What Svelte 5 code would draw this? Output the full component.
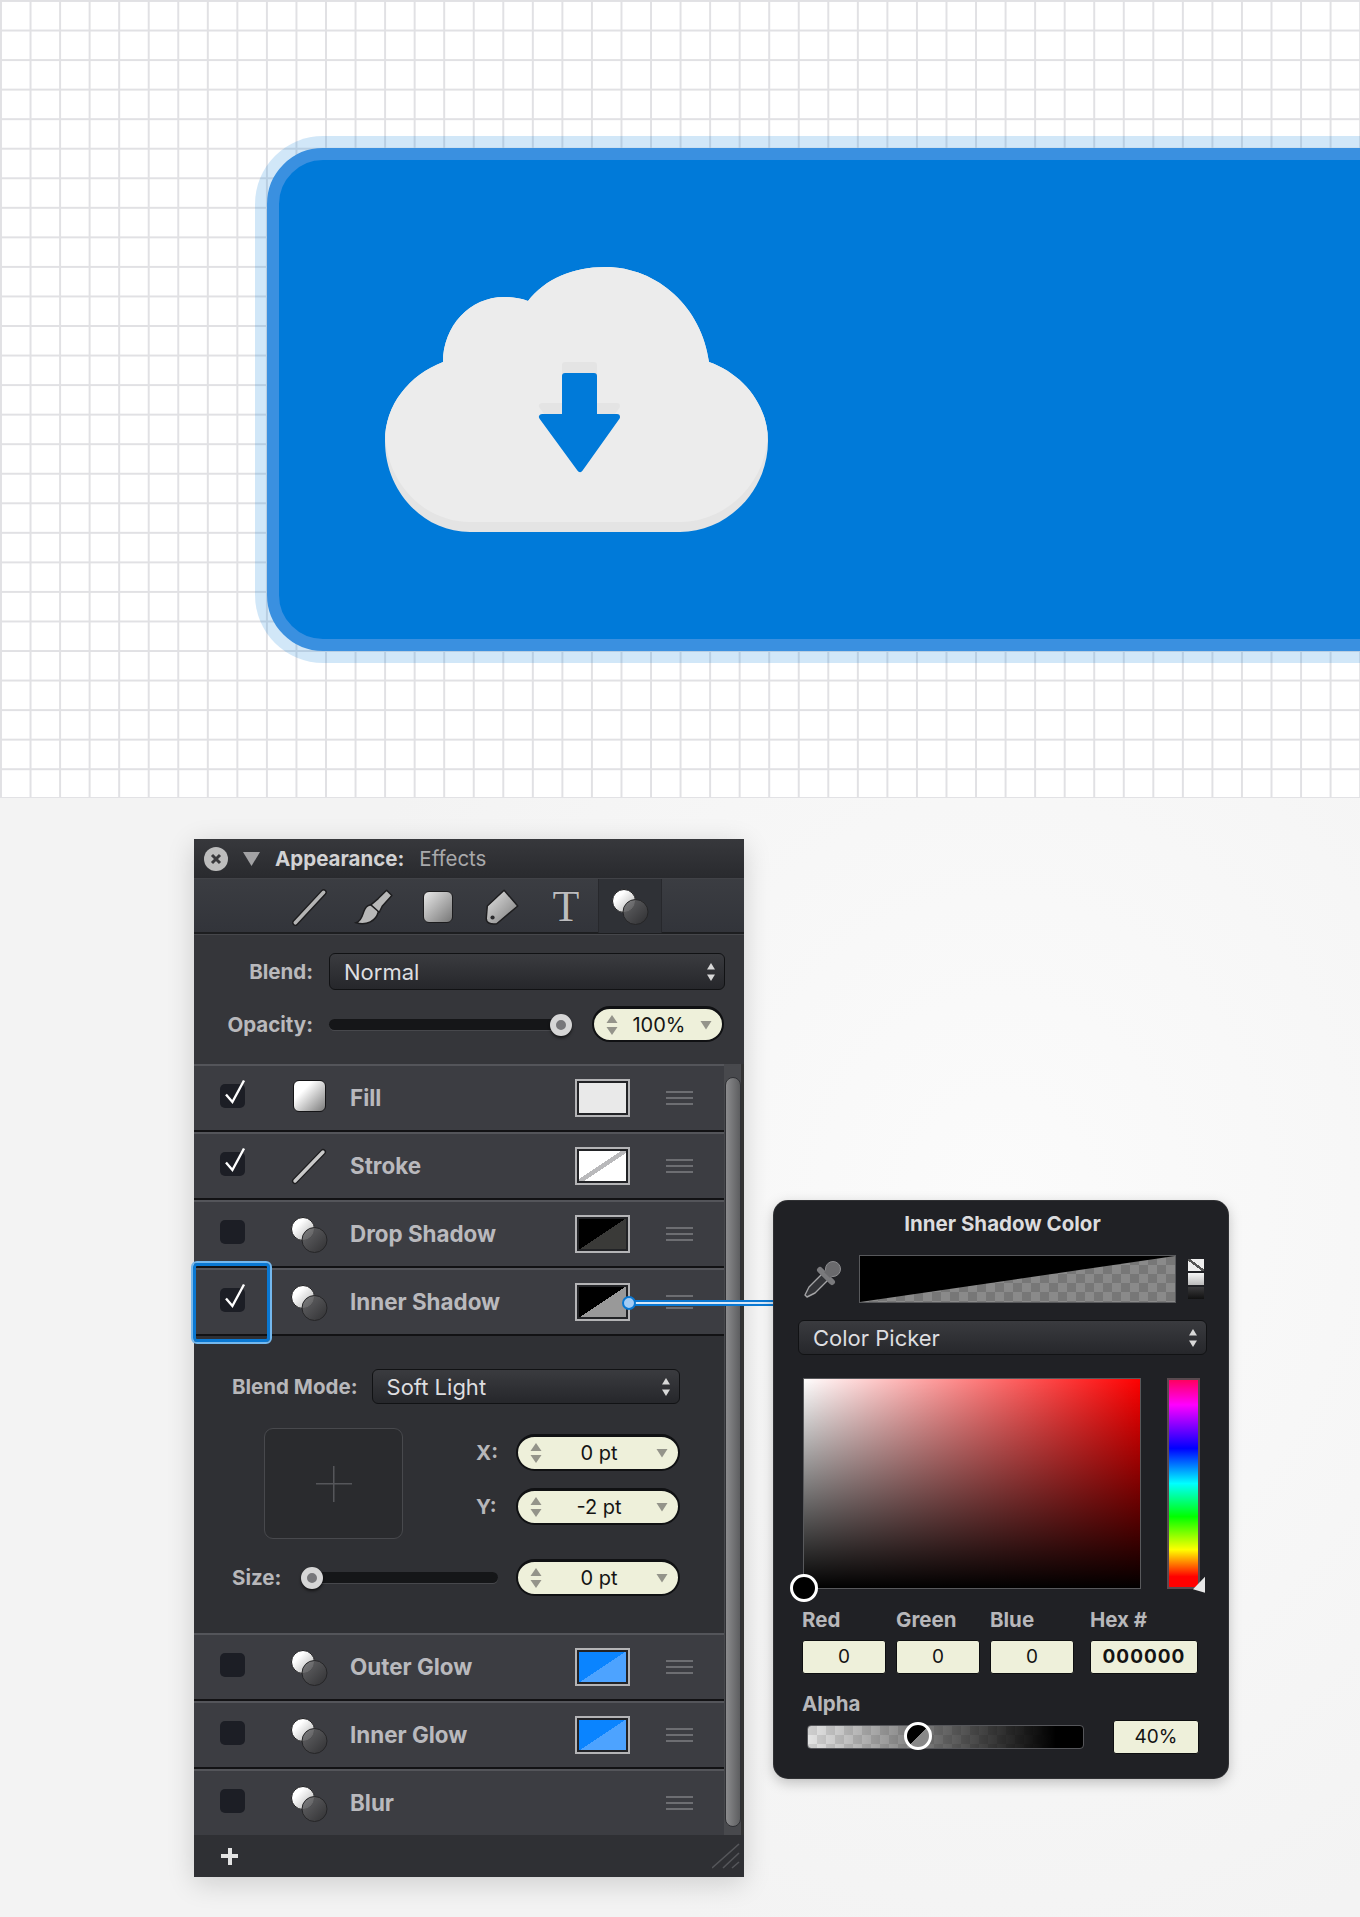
<script>
	const upperRows = [
		{ name: 'Fill', on: true, icon: 'fill', swatch: 'fill' },
		{ name: 'Stroke', on: true, icon: 'stroke', swatch: 'stroke' },
		{ name: 'Drop Shadow', on: false, icon: 'fx', swatch: 'drop' },
		{ name: 'Inner Shadow', on: true, icon: 'fx', swatch: 'inner' }
	];
	const lowerRows = [
		{ name: 'Outer Glow', on: false, icon: 'fx', swatch: 'glow' },
		{ name: 'Inner Glow', on: false, icon: 'fx', swatch: 'glow' },
		{ name: 'Blur', on: false, icon: 'fx', swatch: null }
	];
	const rgb = [
		{ label: 'Red', value: '0' },
		{ label: 'Green', value: '0' },
		{ label: 'Blue', value: '0' }
	];
	const cloud =
		'M470 532C423 532 385 491 385 441C385 405 409 375 443 362C443 326 470 297 504 297C512 297 520 298 528 301C545 279 573 267 605 267C658 267 702 308 709 362C743 374 768 405 768 441C768 491 727 532 680 532Z';
	const arrow = 'M565 376H594V417H617L580 469L542 417H565Z';
</script>

{#snippet fxIcon()}
	<svg class="row-icon" viewBox="0 0 37 37" width="37" height="37">
		<circle cx="12" cy="13" r="11.5" fill="url(#fxWhite)" stroke="#1d1d1f" />
		<circle cx="23.5" cy="24" r="12.5" fill="url(#fxDark)" fill-opacity="0.85" stroke="#252527" />
	</svg>
{/snippet}

{#snippet rowIcon(kind)}
	{#if kind === 'fill'}
		<span class="fill-icon"></span>
	{:else if kind === 'stroke'}
		<svg class="row-icon" viewBox="0 0 37 37" width="37" height="37">
			<line x1="4" y1="33" x2="32" y2="4" stroke="#1c1c1e" stroke-width="6" stroke-linecap="round" />
			<line x1="4" y1="33" x2="32" y2="4" stroke="#c9c9c9" stroke-width="3.4" stroke-linecap="round" />
		</svg>
	{:else}
		{@render fxIcon()}
	{/if}
{/snippet}

{#snippet effectRow(row)}
	<div class="row">
		<span class="check">
			{#if row.on}
				<svg viewBox="0 0 25 24" width="25" height="24">
					<path d="M6 10.5L12.4 18L24 -3.5" fill="none" stroke="#fff" stroke-width="2.4" />
				</svg>
			{/if}
		</span>
		<span class="row-icon-cell">{@render rowIcon(row.icon)}</span>
		<span class="row-name">{row.name}</span>
		{#if row.swatch}
			<span class="swatch {row.swatch}"></span>
		{:else}
			<span class="swatch-gap"></span>
		{/if}
		<span class="handle"><i></i><i></i><i></i></span>
	</div>
{/snippet}

{#snippet updown()}
	<svg class="updown" viewBox="0 0 8 20" width="8" height="20">
		<path d="M4 1L8 7.5H0Z" fill="#d8d8d8" />
		<path d="M4 19L0 12.5H8Z" fill="#d8d8d8" />
	</svg>
{/snippet}

{#snippet select(text, cls)}
	<div class="select {cls}">
		<span>{text}</span>
		{@render updown()}
	</div>
{/snippet}

{#snippet stepper(value, cls)}
	<div class="stepper {cls}">
		<svg viewBox="0 0 12 22" width="12" height="22">
			<path d="M6 1L11.5 9H.5Z" fill="#94948a" />
			<path d="M6 21L.5 13H11.5Z" fill="#94948a" />
		</svg>
		<span>{value}</span>
		<svg viewBox="0 0 12 10" width="12" height="10">
			<path d="M6 9.5L.5 1H11.5Z" fill="#94948a" />
		</svg>
	</div>
{/snippet}

<div class="page">
	<section class="canvas">
		<div class="button">
			<svg class="cloud" viewBox="385 267 384 266" width="384" height="266">
				<defs>
					<clipPath id="cloudClip"><path d={cloud} /></clipPath>
				</defs>
				<path d={cloud} fill="#e4e4e4" />
				<g clip-path="url(#cloudClip)">
					<path d={cloud} fill="#ececec" transform="translate(0 -10)" />
				</g>
				<path d={arrow} fill="#e4e4e4" stroke="#e4e4e4" stroke-width="6" stroke-linejoin="round" transform="translate(0 -11)" />
				<path d={arrow} fill="#007ad9" stroke="#007ad9" stroke-width="6" stroke-linejoin="round" />
			</svg>
		</div>
	</section>

	<section class="stage">
		<svg class="defs" width="0" height="0">
			<defs>
				<linearGradient id="fxWhite" x1="0" y1="0" x2="1" y2="1">
					<stop offset="0.3" stop-color="#fff" />
					<stop offset="1" stop-color="#aaa" />
				</linearGradient>
				<linearGradient id="fxDark" x1="0" y1="0" x2="1" y2="1">
					<stop offset="0" stop-color="#6e6e70" />
					<stop offset="1" stop-color="#2e2e30" />
				</linearGradient>
				<linearGradient id="toolGrad" x1="0" y1="0" x2="1" y2="1">
					<stop offset="0" stop-color="#e6e6e6" />
					<stop offset="1" stop-color="#777" />
				</linearGradient>
			</defs>
		</svg>
		<div class="panel">
			<header class="titlebar">
				<span class="close">
					<svg viewBox="0 0 24 24" width="24" height="24">
						<circle cx="12" cy="12" r="12" fill="#bdbdbd" />
						<path d="M8 8L16 16M16 8L8 16" stroke="#39393c" stroke-width="3" />
					</svg>
				</span>
				<svg class="disclosure" viewBox="0 0 17 14" width="17" height="14">
					<path d="M0 0H17L8.5 14Z" fill="#a2a2a4" />
				</svg>
				<strong>Appearance:</strong>
				<span class="subtitle">Effects</span>
			</header>

			<nav class="toolbar">
				<span class="tool">
					<svg viewBox="0 0 40 40" width="42" height="42">
						<line x1="6" y1="35" x2="33" y2="6" stroke="#1d1d1f" stroke-width="6" stroke-linecap="round" />
						<line x1="6" y1="35" x2="33" y2="6" stroke="#b4b4b4" stroke-width="3.4" stroke-linecap="round" />
					</svg>
				</span>
				<span class="tool">
					<svg viewBox="0 0 40 40" width="42" height="42">
						<path d="M3 35C13 38 22 33 24 25C24 19 19 16 14 19C8 23 11 32 3 35Z" fill="#b8b8b8" stroke="#1d1d1f" stroke-width="1.4" />
						<path d="M17 18L25 25L28 19L37 9L32 4L24 12Z" fill="#b8b8b8" stroke="#1d1d1f" stroke-width="1.4" stroke-linejoin="round" />
					</svg>
				</span>
				<span class="tool"><span class="square-icon"></span></span>
				<span class="tool">
					<svg viewBox="0 0 40 40" width="42" height="42">
						<path d="M6 19L22 4L35 19L15 36Q5 37 5 31Z" fill="url(#toolGrad)" stroke="#1d1d1f" stroke-width="1.4" stroke-linejoin="round" />
						<circle cx="11" cy="30" r="2" fill="#2b2b2d" />
					</svg>
				</span>
				<span class="tool"><span class="t-icon">T</span></span>
				<span class="tool active">{@render fxIcon()}</span>
			</nav>

			<div class="blend">
				<div class="blend-row">
					<span class="blend-label">Blend:</span>
					<div class="grow">{@render select('Normal', 'main')}</div>
				</div>
				<div class="blend-row opacity">
					<span class="blend-label">Opacity:</span>
					<div class="slider opacity-slider"><span class="knob end"></span></div>
					{@render stepper('100%', 'opacity-field')}
				</div>
			</div>

			<div class="body">
				<div class="list">
					{#each upperRows as row}
						{@render effectRow(row)}
					{/each}

					<div class="editor">
						<div class="editor-top">
							<span class="label">Blend Mode:</span>
							{@render select('Soft Light', 'mode')}
						</div>
						<div class="offset">
							<div class="anchor"><span class="cross"></span></div>
							<div class="xy">
								<div class="xy-row">
									<span class="label">X:</span>
									{@render stepper('0 pt', '')}
								</div>
								<div class="xy-row">
									<span class="label">Y:</span>
									{@render stepper('-2 pt', '')}
								</div>
							</div>
						</div>
						<div class="size-row">
							<span class="label">Size:</span>
							<div class="slider size-slider"><span class="knob start"></span></div>
							{@render stepper('0 pt', '')}
						</div>
					</div>

					{#each lowerRows as row}
						{@render effectRow(row)}
					{/each}
				</div>
				<div class="scrollbar"><span class="thumb"></span></div>
			</div>

			<footer class="footer">
				<span class="plus"></span>
				<svg class="grip" viewBox="0 0 28 26" width="28" height="26">
					<path d="M0 25L27 1M11 25L27 10M20 25L27 19" stroke="#55565a" stroke-width="1.6" fill="none" />
				</svg>
			</footer>

			<div class="highlight"></div>
			<div class="connector"><span class="dot"></span></div>

			<aside class="picker">
				<h2>Inner Shadow Color</h2>
				<div class="well-row">
					<svg class="dropper" viewBox="0 0 40 40" width="40" height="40">
						<path d="M6 28L20 14L26 20L12 34L4 38L2 36Z" fill="#333438" stroke="#a4a4a6" stroke-width="1.4" stroke-linejoin="round" />
						<line x1="17" y1="11" x2="29" y2="23" stroke="#7a7a7d" stroke-width="6" stroke-linecap="round" />
						<circle cx="30" cy="10" r="7.5" fill="#6a6a6d" stroke="#8d8d90" />
						<path d="M24 16L30 10" stroke="#6a6a6d" stroke-width="8" />
					</svg>
					<div class="well"><span class="well-solid"></span></div>
					<div class="minis">
						<span class="mini none"></span>
						<span class="mini white"></span>
						<span class="mini black"></span>
					</div>
				</div>
				{@render select('Color Picker', 'picker-select')}
				<div class="spectrum">
					<div class="sv"><span class="sv-dot"></span></div>
					<div class="hue"><span class="hue-mark"></span></div>
				</div>
				<div class="values">
					{#each rgb as c}
						<div class="value">
							<span class="label">{c.label}</span>
							<span class="num">{c.value}</span>
						</div>
					{/each}
					<div class="value hex">
						<span class="label">Hex #</span>
						<span class="num">000000</span>
					</div>
				</div>
				<div class="alpha-label label">Alpha</div>
				<div class="alpha-row">
					<div class="alpha">
						<span class="alpha-knob"></span>
					</div>
					<span class="num alpha-num">40%</span>
				</div>
			</aside>
		</div>
	</section>
</div>

<style>
	:global(body) {
		margin: 0;
		font-family: Inter, 'Liberation Sans', sans-serif;
	}
	.page {
		width: 1360px;
		height: 1917px;
		overflow: hidden;
		background: radial-gradient(ellipse 700px 800px at 1000px 1200px, #fbfbfb, #f3f3f3);
	}
	.canvas {
		box-sizing: border-box;
		height: 798px;
		padding: 148px 0 0 267px;
		overflow: hidden;
		background-color: #fff;
		background-image:
			linear-gradient(#f0f0f1 0.4px, #e1e1e4 0.4px, #e1e1e4 1.5px, #f2f2f3 1.5px, #f2f2f3 2px, transparent 2px),
			linear-gradient(90deg, #f0f0f1 0.4px, #e1e1e4 0.4px, #e1e1e4 1.5px, #f2f2f3 1.5px, #f2f2f3 2px, transparent 2px);
		background-size: 29.55px 29.55px;
		border-bottom: 1px solid #e2e2e5;
	}
	.button {
		box-sizing: border-box;
		width: 1200px;
		height: 503px;
		padding: 107px 106px;
		background: #007ad9;
		border: 12px solid #3a90e0;
		border-radius: 56px;
		box-shadow: 0 0 0 12px rgba(0, 120, 215, 0.18);
	}
	.cloud {
		display: block;
	}

	.stage {
		padding: 41px 0 0 194px;
	}
	.defs {
		position: absolute;
	}
	.panel {
		position: relative;
		width: 550px;
		box-shadow: 0 6px 26px rgba(0, 0, 0, 0.16);
		color: #b9b9bc;
		background: #35363a;
	}

	.titlebar {
		display: flex;
		align-items: center;
		box-sizing: border-box;
		height: 39px;
		padding-left: 10px;
		background: linear-gradient(#37383c, #292a2e);
		border-radius: 9px 9px 0 0;
		font-size: 20.5px;
	}
	.close {
		display: flex;
		margin-right: 15px;
	}
	.disclosure {
		margin-right: 15px;
	}
	.titlebar strong {
		color: #d2d2d4;
		font-weight: 700;
	}
	.subtitle {
		margin-left: 15px;
		color: #a9a9ab;
	}

	.toolbar {
		display: flex;
		box-sizing: border-box;
		height: 56px;
		padding-left: 84px;
		background: linear-gradient(#3b3d42, #32343a);
		border-top: 1px solid #414247;
		border-bottom: 2px solid #1d1e20;
	}
	.tool {
		display: flex;
		align-items: center;
		justify-content: center;
		width: 64px;
		height: 53px;
		padding-top: 1px;
	}
	.tool.active {
		background: #2f3136;
		box-shadow: inset 1px 0 #27282c, inset -1px 0 #27282c;
	}
	.square-icon {
		width: 30px;
		height: 32px;
		box-sizing: border-box;
		border: 1.5px solid #1d1d1f;
		border-radius: 6px;
		background: linear-gradient(135deg, #e8e8e8, #777);
	}
	.t-icon {
		font: 400 44px/1 'Liberation Serif', serif;
		color: #bcbcbe;
		text-shadow: 0 0 1px #111;
	}

	.blend {
		box-sizing: border-box;
		height: 130px;
		padding-top: 18px;
		border-top: 1px solid #46474b;
	}
	.blend-row {
		display: flex;
		align-items: center;
		padding-right: 19px;
	}
	.blend-row.opacity {
		margin-top: 16px;
		padding-right: 20px;
	}
	.blend-label {
		width: 119px;
		margin-right: 16px;
		text-align: right;
		font-size: 20.5px;
		font-weight: 700;
	}
	.grow {
		flex: 1;
	}

	.select {
		display: flex;
		align-items: center;
		justify-content: space-between;
		box-sizing: border-box;
		padding: 0 9px 0 14px;
		border: 1.5px solid #111214;
		border-radius: 6px;
		background: linear-gradient(#3a3b3f, #26272b);
		color: #dedee0;
		font-size: 22px;
	}
	.select.main {
		height: 37px;
	}
	.select.mode {
		flex: 1;
		height: 35px;
	}
	.updown {
		flex: none;
	}

	.slider {
		position: relative;
		height: 11px;
		border-radius: 6px;
		background: #151618;
		box-shadow: 0 1px #47484c;
	}
	.opacity-slider {
		width: 241px;
		margin-right: 22px;
	}
	.knob {
		position: absolute;
		top: -5px;
		width: 22px;
		height: 22px;
		box-sizing: border-box;
		border: 6px solid #d6d6d6;
		border-radius: 50%;
		background: #77777a;
		box-shadow: 0 2px 3px rgba(0, 0, 0, 0.6);
	}
	.knob.end {
		right: -2px;
	}
	.knob.start {
		left: -1px;
	}

	.stepper {
		display: flex;
		align-items: center;
		justify-content: space-between;
		flex: none;
		box-sizing: border-box;
		width: 164px;
		height: 37px;
		padding: 0 10px 0 12px;
		border: 2px solid #101113;
		border-top-width: 3px;
		border-radius: 19px;
		background: #eef0da;
		color: #141414;
		font-size: 20px;
	}
	.stepper.opacity-field {
		width: 132px;
		height: 36px;
	}
	.stepper span {
		flex: 1;
		text-align: center;
	}

	.body {
		display: flex;
		height: 771px;
	}
	.list {
		width: 530px;
		background: #2f3034;
	}
	.row {
		display: flex;
		align-items: center;
		box-sizing: border-box;
		height: 68px;
		padding: 0 31px 0 26px;
		background: #3c3d42;
		border-top: 2px solid #54555a;
		border-bottom: 2px solid #121214;
	}
	.check {
		position: relative;
		width: 25px;
		height: 24px;
		margin-top: -4px;
		border-radius: 5px;
		background: #1c1e25;
	}
	.check svg {
		position: absolute;
		overflow: visible;
	}
	.row-icon-cell {
		display: flex;
		align-items: center;
		width: 37px;
		margin: 0 22px 0 46px;
	}
	.row-icon {
		overflow: visible;
	}
	.fill-icon {
		width: 33px;
		height: 32px;
		box-sizing: border-box;
		margin: -4px 0 0 2px;
		border: 1.5px solid #151517;
		border-radius: 6px;
		background: linear-gradient(135deg, #fff 30%, #7a7a7a);
	}
	.row-name {
		flex: 1;
		margin-top: -2px;
		font-size: 22.4px;
		font-weight: 700;
		color: #b9b9bd;
	}
	.swatch,
	.swatch-gap {
		box-sizing: border-box;
		width: 55px;
		height: 38px;
		margin-right: 36px;
	}
	.swatch {
		border: 2px solid #b4b4b6;
		outline: 2px solid #222326;
		outline-offset: -4px;
	}
	.swatch.fill {
		background: #e9e9e9;
	}
	.swatch.stroke {
		background: linear-gradient(to bottom right, #fff 46%, #b9b9bb 46%, #b9b9bb 54%, #fff 54%);
	}
	.swatch.drop {
		background: linear-gradient(to bottom right, #000 50%, #3a3a38 50%);
	}
	.swatch.inner {
		background: linear-gradient(to bottom right, #000 50%, #999 50%);
	}
	.swatch.glow {
		background: linear-gradient(to bottom right, #0a84ff 50%, #4da3ff 50%);
	}
	.handle {
		display: flex;
		flex-direction: column;
		gap: 4px;
		width: 27px;
	}
	.handle i {
		height: 2px;
		background: #6d6e72;
	}

	.editor {
		box-sizing: border-box;
		height: 297px;
		padding: 33px 44px 0 38px;
		background: #2f3034;
		color: #b9b9bc;
	}
	.label {
		font-size: 20.5px;
		font-weight: 700;
		color: #b7b7ba;
	}
	.editor-top {
		display: flex;
		align-items: center;
		gap: 14px;
	}
	.offset {
		display: flex;
		margin-top: 24px;
		padding-left: 32px;
	}
	.anchor {
		position: relative;
		flex: none;
		box-sizing: border-box;
		width: 139px;
		height: 111px;
		border: 1.5px solid #48494d;
		border-radius: 9px;
		background: #2a2b2e;
	}
	.cross {
		position: absolute;
		left: 51px;
		top: 37px;
		width: 36px;
		height: 36px;
		background:
			linear-gradient(#55565a, #55565a) center / 36px 1.5px no-repeat,
			linear-gradient(#55565a, #55565a) center / 1.5px 36px no-repeat;
	}
	.xy {
		flex: 1;
		display: flex;
		flex-direction: column;
		gap: 17px;
		padding-top: 6px;
	}
	.xy-row {
		display: flex;
		align-items: center;
		justify-content: space-between;
		padding-left: 73px;
	}
	.size-row {
		display: flex;
		align-items: center;
		margin-top: 20px;
	}
	.size-slider {
		flex: 1;
		margin: 0 18px 0 21px;
	}

	.scrollbar {
		position: relative;
		flex: 1;
		background: #48494d;
		box-shadow: inset -3px 0 #333;
	}
	.thumb {
		position: absolute;
		left: 1px;
		top: 13px;
		bottom: 8px;
		width: 16px;
		box-sizing: border-box;
		border: 1px solid #2f3034;
		border-radius: 8px;
		background: linear-gradient(90deg, #8b8b8d, #5d5e60);
	}

	.footer {
		position: relative;
		display: flex;
		align-items: center;
		justify-content: space-between;
		box-sizing: border-box;
		height: 42px;
		padding: 0 4px 0 27px;
		background: #2f3034;
	}
	.plus {
		width: 17px;
		height: 17px;
		background:
			linear-gradient(#e3e3e3, #e3e3e3) center / 17px 4px no-repeat,
			linear-gradient(#e3e3e3, #e3e3e3) center / 4px 17px no-repeat;
	}

	.highlight {
		position: absolute;
		left: -1px;
		top: 424px;
		box-sizing: border-box;
		width: 77px;
		height: 79px;
		border: 3px solid #0a78d2;
		outline: 2px solid #74b8ee;
		border-radius: 4px;
	}
	.connector {
		position: absolute;
		left: 435px;
		top: 461px;
		width: 145px;
		height: 6px;
		box-sizing: border-box;
		background: #d8e8f8;
		border-top: 2px solid #0a78d2;
		border-bottom: 2px solid #0a78d2;
	}
	.dot {
		position: absolute;
		left: -7px;
		top: -6px;
		box-sizing: border-box;
		width: 14px;
		height: 14px;
		border: 2px solid #0a78d2;
		border-radius: 50%;
		background: #a4ccf4;
	}

	.picker {
		position: absolute;
		left: 580px;
		top: 362px;
		box-sizing: border-box;
		width: 454px;
		height: 577px;
		padding: 0 21px 0 24px;
		border-radius: 14px;
		background: #202125;
		box-shadow: 0 0 0 1px #303134, 0 4px 14px rgba(0, 0, 0, 0.25);
	}
	.picker h2 {
		margin: 0;
		padding-top: 10px;
		height: 42px;
		box-sizing: border-box;
		text-align: center;
		font-size: 20.5px;
		font-weight: 700;
		color: #dcdcde;
	}
	.well-row {
		display: flex;
		align-items: center;
		height: 48px;
		margin: 12px 0 17px 5px;
	}
	.dropper {
		margin-right: 16px;
		overflow: visible;
	}
	.well {
		position: relative;
		box-sizing: border-box;
		width: 317px;
		height: 48px;
		border: 1.5px solid #58595c;
		background: repeating-conic-gradient(#8a8a8a 0 25%, #777 0 50%) 0 0 / 18px 18px;
	}
	.well-solid {
		position: absolute;
		inset: 0;
		background: #000;
		clip-path: polygon(0 0, 100% 0, 0 100%);
	}
	.minis {
		display: flex;
		flex-direction: column;
		gap: 2px;
		margin-left: 12px;
	}
	.mini {
		width: 16px;
		height: 12px;
	}
	.mini.none {
		background: linear-gradient(to top right, #eee 44%, #555 44%, #555 56%, #eee 56%);
	}
	.mini.white {
		background: linear-gradient(#f5f5f5, #bbb);
	}
	.mini.black {
		background: linear-gradient(#3b3b3d, #111);
	}
	.select.picker-select {
		height: 35px;
	}
	.spectrum {
		display: flex;
		justify-content: space-between;
		margin: 23px 7px 0 5px;
	}
	.sv {
		position: relative;
		box-sizing: border-box;
		width: 338px;
		height: 211px;
		border: 1.5px solid #58595c;
		background:
			linear-gradient(to top, #000, transparent),
			linear-gradient(to right, #fff, #f00);
		background-origin: border-box;
	}
	.sv-dot {
		position: absolute;
		left: -14px;
		bottom: -14px;
		box-sizing: border-box;
		width: 28px;
		height: 28px;
		border: 3px solid #fff;
		border-radius: 50%;
		background: #000;
	}
	.hue {
		position: relative;
		box-sizing: border-box;
		width: 33px;
		height: 211px;
		border: 2px solid #5a4a50;
		background: linear-gradient(#ff0060, #f0f 12%, #00f 33%, #0ff 50%, #0f0 66%, #ff0 82%, #f00 95%);
	}
	.hue-mark {
		position: absolute;
		right: -7px;
		bottom: -8px;
		width: 0;
		height: 0;
		border-top: 8px solid transparent;
		border-bottom: 8px solid transparent;
		border-right: 12px solid #e8e8e8;
		transform: skewY(-20deg);
	}
	.values {
		display: flex;
		gap: 10px;
		margin-top: 18px;
		padding-left: 4px;
	}
	.value {
		display: flex;
		flex-direction: column;
		gap: 8px;
		width: 84px;
	}
	.value.hex {
		width: 108px;
		margin-left: 6px;
	}
	.num {
		box-sizing: border-box;
		display: block;
		height: 34px;
		line-height: 31px;
		text-align: center;
		border: 1.5px solid #0e0f11;
		border-radius: 3px;
		background: #eef0da;
		color: #141414;
		font-size: 19px;
	}
	.hex .num {
		font-weight: 700;
		letter-spacing: 1px;
	}
	.alpha-label {
		margin: 17px 0 0 4px;
	}
	.alpha-row {
		display: flex;
		align-items: center;
		justify-content: space-between;
		margin: 4px 8px 0 9px;
	}
	.alpha {
		position: relative;
		box-sizing: border-box;
		width: 277px;
		height: 24px;
		border: 1.5px solid #55565a;
		border-radius: 4px;
		background:
			linear-gradient(90deg, transparent, #000 90%),
			repeating-conic-gradient(#e4e4e4 0 25%, #cfcfcf 0 50%) 0 0 / 18px 18px;
	}
	.alpha-knob {
		position: absolute;
		left: 96px;
		top: -4px;
		box-sizing: border-box;
		width: 28px;
		height: 28px;
		border: 3px solid #fff;
		border-radius: 50%;
		background: linear-gradient(to bottom right, #000 50%, #888 50%);
	}
	.alpha-num {
		width: 86px;
	}
</style>
